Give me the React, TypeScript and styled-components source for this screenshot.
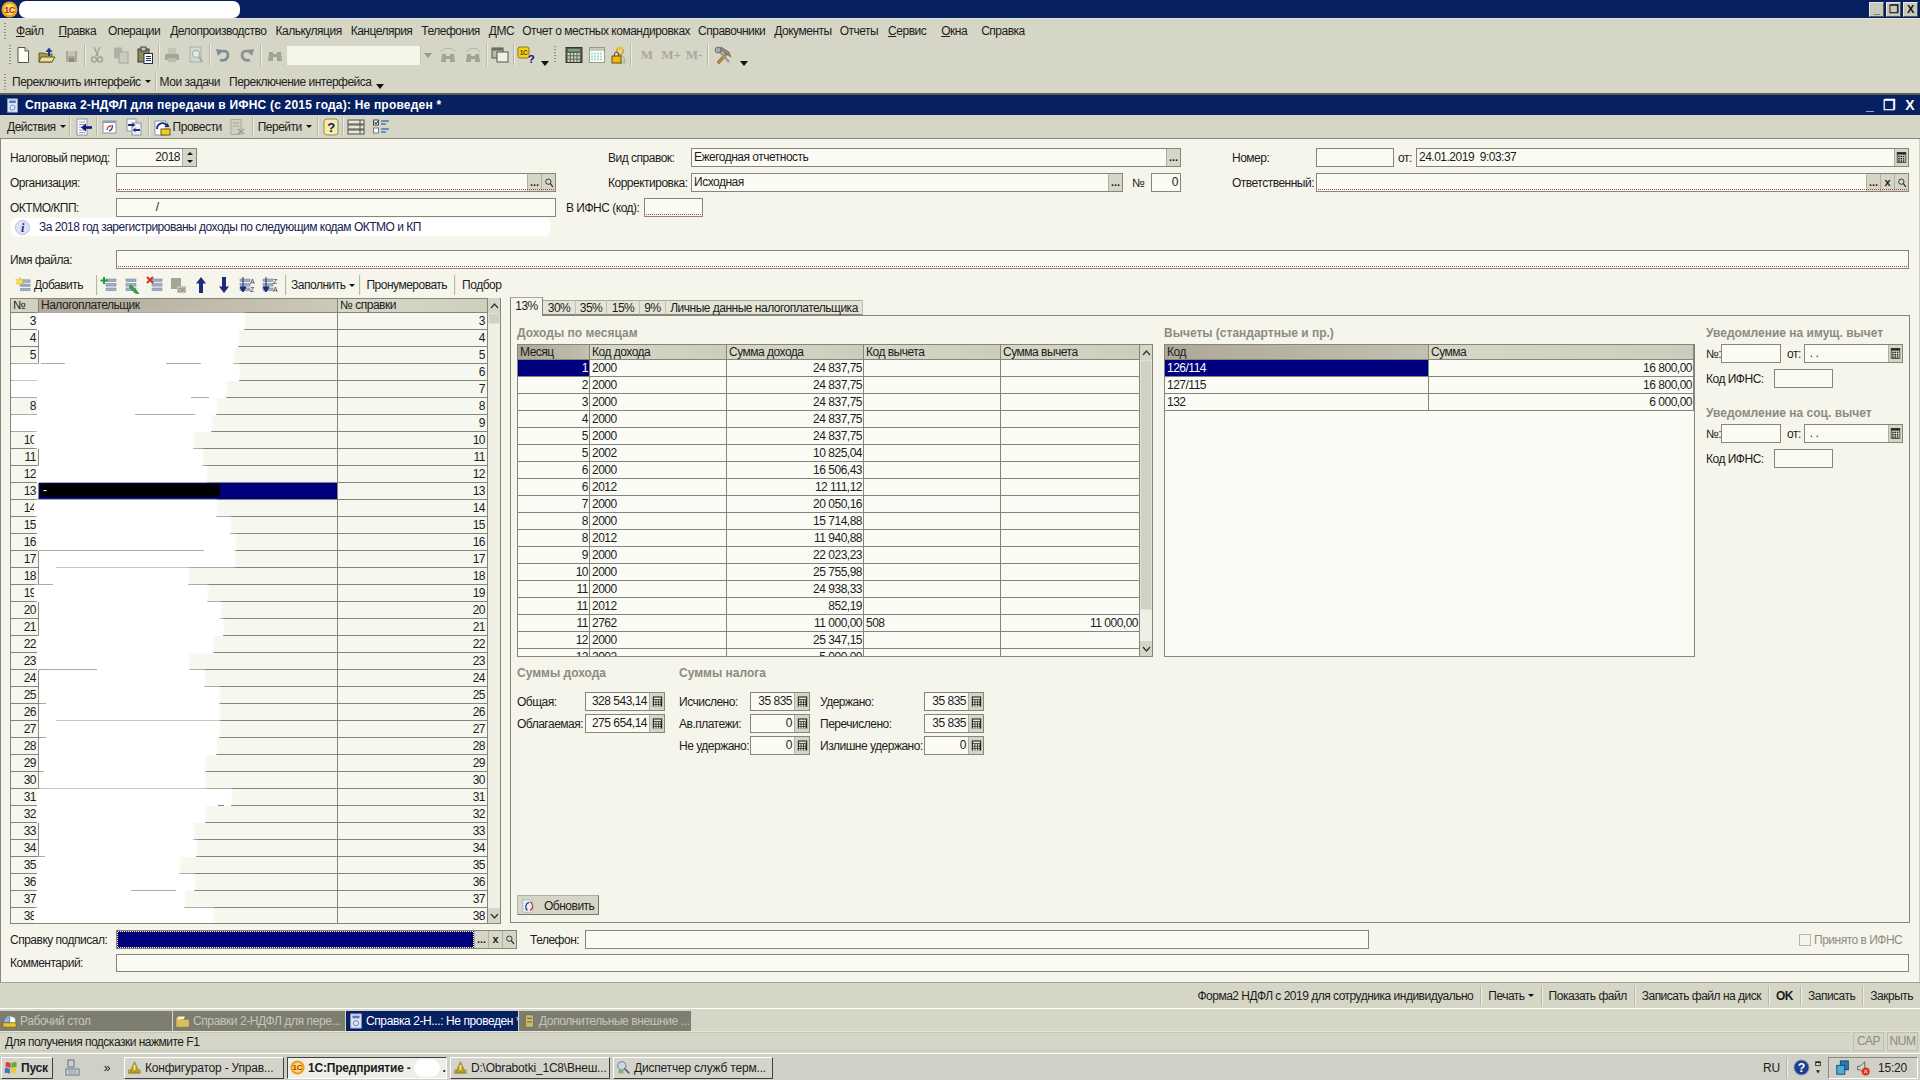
import React from "react";
import styled, { createGlobalStyle } from "styled-components";

const CHROME = "#d6d6c6";
const FORM = "#f6f5eb";
const LINE = "#85857a";
const NAVY = "#062062";
const SEL = "#00007e";

const GlobalStyle = createGlobalStyle`
  html, body { margin: 0; padding: 0; overflow: hidden; background: ${CHROME}; }
  body { font-family: "Liberation Sans", Arial, sans-serif; font-size: 12px; letter-spacing: -0.5px; color: #1c1c1c; }
  * { box-sizing: border-box; }
`;

const Page = styled.div`
  width: 1920px;
  height: 1080px;
  display: flex;
  flex-direction: column;
  overflow: hidden;
  white-space: nowrap;
`;

/* ---------- icons ---------- */
const bars = (x: number, c = "#9fb0c8") => (
  <g fill={c} stroke="#6f7f98" strokeWidth=".5">
    <rect x={x} y="3" width="10" height="2.6" />
    <rect x={x} y="7.5" width="10" height="2.6" />
    <rect x={x} y="12" width="10" height="2.6" />
  </g>
);
const keys = (x: number, y: number, c: string, cols = 3, rows = 3, step = 3.2) => {
  const out: React.ReactElement[] = [];
  for (let i = 0; i < cols; i++)
    for (let j = 0; j < rows; j++)
      out.push(<rect key={i + "-" + j} x={x + i * step} y={y + j * step} width={step - 1} height={step - 1} fill={c} />);
  return out;
};

const icons: Record<string, React.ReactElement> = {
  logo: (
    <g>
      <circle cx="9" cy="9" r="8.5" fill="#e8a020" />
      <circle cx="9" cy="9" r="6" fill="#f7e06a" />
      <text x="9" y="12.5" textAnchor="middle" fontSize="9.5" fontWeight="700" fill="#c8261a" fontFamily="Liberation Sans">1C</text>
    </g>
  ),
  doc: <g><path d="M4 1.5h7l3.5 3.5v11.5H4z" fill="#fffff2" stroke="#55554a" /><path d="M11 1.5V5h3.5" fill="#e2e2d2" stroke="#55554a" /></g>,
  open: <g><path d="M1 7h5l1 1h7v8H1z" fill="#a99d4e" stroke="#5b5a30" /><path d="M1 16l2-5h14l-3 5z" fill="#ebe097" stroke="#5b5a30" /><path d="M11 10V5" stroke="#1e3f80" strokeWidth="2" /><path d="M7.5 6L11 1.5 14.5 6z" fill="#1e3f80" /></g>,
  save: <g><rect x="4" y="5" width="11" height="11" fill="#a9a89a" /><rect x="6" y="5" width="7" height="5" fill="#c4c4b6" /><rect x="7" y="12" width="5" height="4" fill="#8c8b7e" /></g>,
  cut: <g fill="none" stroke="#a3a395" strokeWidth="1.5"><path d="M6 1l4 9M12 1L8 10" /><circle cx="6" cy="13.5" r="2.4" /><circle cx="12" cy="13.5" r="2.4" /></g>,
  copy: <g><rect x="2" y="1.5" width="8" height="11" fill="#b2b2a4" /><rect x="7" y="6" width="9" height="11" fill="#cbcbbd" stroke="#a5a597" /></g>,
  paste: <g><rect x="2" y="3" width="11" height="13" fill="#8c8a5a" stroke="#3a3a30" /><rect x="5" y="1" width="5" height="4" fill="#c8c8c0" stroke="#3a3a30" /><rect x="8" y="7.5" width="8.5" height="10" fill="#fff" stroke="#22304a" /><path d="M10 10.5h5M10 12.5h5M10 14.5h5" stroke="#22304a" /></g>,
  print: <g><rect x="5" y="2" width="8" height="6" fill="#c4c4b6" /><rect x="2" y="8" width="14" height="6" rx="1" fill="#a5a597" /><rect x="5" y="12" width="8" height="4" fill="#bcbcae" /></g>,
  preview: <g><rect x="3" y="1" width="11" height="15" fill="#d2d8d0" stroke="#a9b0a6" /><circle cx="9" cy="8" r="3.6" fill="#e4ece8" stroke="#9aabb0" /><path d="M12 11l3.5 5" stroke="#9aabb0" strokeWidth="2" /></g>,
  undo: <g><path d="M5 7c2-3 9-3 9 2s-5 6-8 5" fill="none" stroke="#7d8a9c" strokeWidth="2.6" /><path d="M2 3l7 1-5 6z" fill="#7d8a9c" /></g>,
  redo: <g transform="matrix(-1 0 0 1 18 0)"><path d="M5 7c2-3 9-3 9 2s-5 6-8 5" fill="none" stroke="#8e9095" strokeWidth="2.6" /><path d="M2 3l7 1-5 6z" fill="#8e9095" /></g>,
  binoc: <path d="M3 6h4v9H2zM11 6h4l1 9h-5zM7 8h4v3H7z" fill="#a3a395" />,
  binocL: <g><path d="M3 8h4v8H2zM11 8h4l1 8h-5zM7 10h4v3H7z" fill="#a3a395" /><path d="M2 6c3-5 11-5 14 0" fill="none" stroke="#b3b3a5" /></g>,
  win: <g><rect x="1" y="2" width="11" height="10" fill="#b8b8aa" stroke="#55554a" /><rect x="1" y="2" width="11" height="2.5" fill="#6c6c60" /><rect x="6" y="6" width="11" height="10" fill="#f0f0e4" stroke="#55554a" /></g>,
  help1c: <g><rect x="1" y="1" width="11" height="11" rx="2" fill="#f5d21a" stroke="#8a7a10" /><text x="6.5" y="9" textAnchor="middle" fontSize="6.5" fill="#6a4a00" fontWeight="700" fontFamily="Liberation Sans">1C</text><text x="14" y="16.5" textAnchor="middle" fontSize="11" fontWeight="700" fill="#12127e" fontFamily="Liberation Sans">?</text></g>,
  calc: <g><rect x="1" y="1.5" width="16" height="15" fill="#556050" stroke="#33382e" /><rect x="3" y="3" width="12" height="2.5" fill="#7ea070" />{keys(2.6, 7, "#d4d4c6", 4, 3, 3.3)}</g>,
  calendar: <g><rect x="1.5" y="1.5" width="15" height="15" fill="#fff" stroke="#9a9a8c" /><rect x="2" y="2" width="14" height="3" fill="#c8c8ba" />{keys(3, 6.5, "#a6e0d0", 4, 3, 3)}</g>,
  userlock: <g><circle cx="10" cy="5" r="3.4" fill="#f0cf8a" stroke="#a8873a" /><path d="M6 2l3-1.5 4 1v2H7z" fill="#e2c430" /><path d="M6 17c0-6 1-8 4-8s5 2 5 8z" fill="#bfd8a0" stroke="#7c9060" strokeWidth=".5" /><rect x="2" y="10" width="9" height="7" fill="#f0b818" stroke="#6c5010" /><path d="M4.5 10V8a2 2 0 014 0v2" fill="none" stroke="#6c5010" /></g>,
  tools: <g><path d="M3 16L12 6l2 2-9 10z" fill="#b9883e" stroke="#6a4c18" strokeWidth=".5" /><path d="M7 1l8 5 2 5-3-2-8-5z" fill="#8f8f88" stroke="#44443e" strokeWidth=".5" /><path d="M15 16L5 5" stroke="#9a9a92" strokeWidth="2.4" /><circle cx="4" cy="4" r="3" fill="#aaa" stroke="#44443e" strokeWidth=".6" /></g>,
  back: <g><rect x="2" y="1" width="10" height="16" fill="#fff" stroke="#8a94a8" /><path d="M4 4h6M4 6.5h6M4 9h6M4 12h6M4 14.5h6" stroke="#8c9cc0" /><path d="M17 9.5h-7" stroke="#14147e" strokeWidth="2.6" /><path d="M11 5.5L6 9.5l5 4z" fill="#14147e" /></g>,
  refresh: <g><rect x="2" y="3" width="13" height="12" fill="#fff" stroke="#8a94a8" /><rect x="2" y="3" width="13" height="2" fill="#8c9cc0" /><path d="M6 12c0-3 2-4 4-4" fill="none" stroke="#c0382a" strokeWidth="1.3" /><path d="M11 7c1 2 0 5-3 6" fill="none" stroke="#20407a" strokeWidth="1.3" /></g>,
  swap: <g><rect x="2" y="1" width="9" height="12" fill="#fff" stroke="#8a94a8" /><rect x="7" y="5" width="9" height="12" fill="#f2f4fa" stroke="#8a94a8" /><path d="M3 6h5l-1.5-2 4 3-4 3L8 8H3zM15 11h-5l1.5-2-4 3 4 3-1.5-2h5z" fill="#1c2c8a" /></g>,
  post: <g><rect x="2" y="3" width="11" height="14" fill="#fff" stroke="#8a94a8" /><path d="M4 11c0-6 7-8 10-3" fill="none" stroke="#1c2c8a" strokeWidth="1.8" /><path d="M11.5 9h5l-2-4z" fill="#1c2c8a" /><rect x="8" y="11" width="9" height="6" fill="#f0d020" stroke="#6c5a10" /></g>,
  postOff: <g><rect x="3" y="1.5" width="10" height="15" fill="#cfcfc2" stroke="#a9a99c" /><path d="M5 5h6M5 8h6" stroke="#a9a99c" /><path d="M10 11l6 5M16 11l-6 5" stroke="#9a9a8e" strokeWidth="1.4" /></g>,
  help: <g><rect x="2" y="1" width="14" height="16" rx="3" fill="#f6eea0" stroke="#8a8a70" /><text x="9" y="14" textAnchor="middle" fontSize="13" fontWeight="700" fill="#12127e" fontFamily="Liberation Sans">?</text></g>,
  columns: <g fill="#e6e6da" stroke="#50504a"><rect x="1" y="2" width="16" height="4" /><rect x="1" y="7" width="16" height="4" /><rect x="1" y="12" width="16" height="4" /><path d="M13 2v14" /></g>,
  checks: <g><rect x="1.5" y="2" width="5" height="5" fill="#fff" stroke="#444" /><path d="M2.5 4l1.5 2 2-3" fill="none" stroke="#111" /><rect x="1.5" y="10" width="5" height="5" fill="#fff" stroke="#777" /><path d="M9 3h8M9 6h5M9 11h8M9 14h5" stroke="#4a78b8" strokeWidth="1.6" /></g>,
  addRow: <g>{bars(6)}<path d="M5 0l1.3 3 3-.8-1.8 2.6 1.8 2.4-3-.6L5 9.5 3.7 6.6l-3 .6 1.8-2.4L.7 2.2l3 .8z" fill="#f6e24a" stroke="#c0a820" strokeWidth=".4" /></g>,
  rowAdd: <g>{bars(6)}<path d="M4 1v7M.5 4.5h7" stroke="#1c9a3a" strokeWidth="2" /></g>,
  rowEdit: <g>{bars(3)}<path d="M8 9l6 6 2 3-4-1-6-6z" fill="#2ea84a" stroke="#1c6a2a" strokeWidth=".5" /></g>,
  rowDel: <g>{bars(6)}<path d="M1 1l6 6M7 1L1 7" stroke="#d8301a" strokeWidth="2" /></g>,
  rowOk: <g><rect x="2" y="2" width="10" height="11" fill="#a5a597" /><rect x="8" y="10" width="9" height="7" fill="#c0c0b2" /><text x="12.4" y="16" textAnchor="middle" fontSize="5.5" fill="#77776a" fontFamily="Liberation Sans">OK</text></g>,
  up: <path d="M9 1L4 7.5h3V17h4V7.5h3z" fill="#1c2c7a" />,
  down: <path d="M9 17l-5-6.5h3V1h4v9.5h3z" fill="#1c2c7a" />,
  sortAZ: <g>{bars(2)}<path d="M5 1v13M2 11l3 5 3-5z" stroke="#1c2c7a" fill="#1c2c7a" /><text x="14" y="8" textAnchor="middle" fontSize="7" fill="#334" fontFamily="Liberation Sans">A</text><text x="14" y="16" textAnchor="middle" fontSize="7" fill="#334" fontFamily="Liberation Sans">Z</text></g>,
  sortZA: <g>{bars(2)}<path d="M5 1v13M2 11l3 5 3-5z" stroke="#1c2c7a" fill="#1c2c7a" /><text x="14" y="8" textAnchor="middle" fontSize="7" fill="#334" fontFamily="Liberation Sans">Z</text><text x="14" y="16" textAnchor="middle" fontSize="7" fill="#334" fontFamily="Liberation Sans">A</text></g>,
  update: <g><rect x="1" y="2" width="11" height="14" fill="#e8eef8" stroke="#98a6c0" strokeDasharray="2 1" /><path d="M6 14c-3-3-2-8 2-9" fill="none" stroke="#20407a" strokeWidth="1.4" /><path d="M9 4c4 3 4 8 0 10" fill="none" stroke="#c0382a" strokeWidth="1.4" /></g>,
  info: <g><circle cx="9" cy="9" r="7.5" fill="#dfe2f4" stroke="#b9bede" /><text x="9" y="14" textAnchor="middle" fontSize="13" fontStyle="italic" fontWeight="700" fill="#1c2c8a" fontFamily="Liberation Serif">i</text></g>,
  formDoc: <g><rect x="3" y="1" width="12" height="16" fill="#dfe6f4" stroke="#8a9ac0" /><rect x="5" y="3" width="8" height="3" fill="#5a78b8" /><circle cx="9" cy="11.5" r="3" fill="none" stroke="#5a78b8" /></g>,
  desk: <g><path d="M2 8l5-6 2 1v8H2z" fill="#8fb0e0" stroke="#445" strokeWidth=".4" /><path d="M9 3l6 3v6H9z" fill="#fff" stroke="#667" strokeWidth=".4" /><rect x="1" y="11" width="15" height="5" rx="1" fill="#e8c438" stroke="#7a6a18" /></g>,
  folder: <g><path d="M1 5h6l1 2h8v9H1z" fill="#d8c060" stroke="#7a6a30" strokeWidth=".6" /><path d="M3 4h8l-1 3H3z" fill="#f4f0e0" /></g>,
  cabinet: <g><path d="M5 2h9v14H5z" fill="#c8b878" stroke="#5a5030" strokeWidth=".6" /><path d="M2 6l3-2v12H2z" fill="#8a7c48" /><path d="M7 6h5M7 10h5" stroke="#5a5030" /></g>,
  flag: <g><path d="M2 3c3-2 4 1 6 0v6c-2 1-3-2-6 0z" fill="#e0402a" /><path d="M9 3c2 1 3-2 6 0v6c-3-2-4 1-6 0z" fill="#5cb03a" /><path d="M1 10c3-2 4 1 6 0v6c-2 1-3-2-6 0z" fill="#3a70d8" /><path d="M8 10c2 1 3-2 6 0v6c-3-2-4 1-6 0z" fill="#f0c828" /></g>,
  netbox: <g><rect x="4" y="1" width="6" height="7" fill="#c8d0d8" stroke="#66707a" /><rect x="2" y="10" width="13" height="6" fill="#d8dce0" stroke="#66707a" /><path d="M4 12h9M4 14h9" stroke="#88909a" /></g>,
  app: <g><rect x="2" y="12" width="14" height="4" fill="#d8c040" stroke="#6a6020" strokeWidth=".5" /><path d="M3 15L9 2l6 13z" fill="#b8a020" stroke="#6a6020" strokeWidth=".5" /><path d="M8 6h2v6H8z" fill="#f8f0a0" /></g>,
  term: <g><circle cx="7" cy="7" r="5" fill="#c8d8e8" stroke="#667" /><path d="M10 10l6 6" stroke="#667" strokeWidth="2" /><rect x="3" y="12" width="6" height="4" fill="#8fb05a" /></g>,
  helpRound: <g><circle cx="9" cy="9" r="8" fill="#20408a" stroke="#8a9ac0" /><text x="9" y="14" textAnchor="middle" fontSize="13" fontWeight="700" fill="#fff" fontFamily="Liberation Sans">?</text></g>,
  trayNet: <g><rect x="6" y="1" width="9" height="10" fill="#2a78b8" stroke="#17406a" /><rect x="2" y="6" width="9" height="10" fill="#4ab0d8" stroke="#17406a" /></g>,
  speaker: <g><path d="M3 7h3l5-5v14l-5-5H3z" fill="#d8d8cc" stroke="#555" /><circle cx="12" cy="13" r="4.5" fill="#d8301a" /><path d="M10 11l4 4M14 11l-4 4" stroke="#fff" /></g>,
  trayMore: <g><rect x="6" y="1" width="6" height="5" fill="none" stroke="#222" /><rect x="6" y="1" width="6" height="1.6" fill="#222" /><path d="M6.5 12h5L9 16z" fill="#222" /></g>,
  calcKey: <g><rect x="2.5" y="2" width="13" height="14" fill="#23231f" /><rect x="4" y="3.5" width="10" height="2.4" fill="#e4e4d8" />{keys(4, 7, "#e4e4d8", 3, 3, 3.4)}</g>,
  calKey: <g><rect x="3" y="2" width="12" height="14" fill="#e8e8dc" stroke="#222" /><rect x="3" y="2" width="12" height="3" fill="#222" />{keys(4.4, 6.4, "#222", 3, 3, 3.2)}</g>,
  mag: <g fill="none" stroke="#1e1e1e" strokeWidth="1.3"><circle cx="8" cy="7" r="4" /><path d="M11 10l4 5" strokeWidth="1.8" /></g>,
};

const IconBox = styled.svg`
  flex: none;
  display: block;
`;

const Icon = ({ n, s = 18 }: { n: string; s?: number }) => (
  <IconBox width={s} height={s} viewBox="0 0 18 18">
    {icons[n]}
  </IconBox>
);

/* ---------- app chrome ---------- */
const AppTitle = styled.div`
  height: 18px;
  background: ${NAVY};
  display: flex;
  align-items: center;
  flex: none;
`;
const LogoCell = styled.div`
  width: 19px;
  padding-left: 1px;
`;
const RedactPill = styled.div`
  width: 221px;
  height: 17px;
  background: #fff;
  border-radius: 7px;
`;
const WinButtons = styled.div`
  margin-left: auto;
  display: flex;
  gap: 2px;
  padding-right: 2px;
`;
const WinButton = styled.div`
  width: 15px;
  height: 15px;
  background: #c8c8bc;
  border: 1px solid #e8e8e0;
  border-right-color: #555;
  border-bottom-color: #555;
  font-size: 11px;
  line-height: 12px;
  font-weight: 700;
  text-align: center;
  color: #111;
`;
const WinGlyphs = styled.div`
  margin-left: auto;
  display: flex;
  align-items: center;
  color: #fff;
  font-weight: 700;
  font-size: 14px;
`;
const WinGlyph = styled.span`
  width: 20px;
  text-align: center;
`;

const MenuBar = styled.div`
  height: 22px;
  flex: none;
  background: ${CHROME};
  display: flex;
  align-items: center;
  padding: 2px 0 0 4px;
  border-top: 1px solid #e4e4d8;
`;
const Grip = styled.div<{ $h?: number; $l?: number; $r?: number }>`
  width: 2px;
  height: ${(p) => p.$h ?? 16}px;
  flex: none;
  margin: 0 ${(p) => p.$r ?? 0}px 0 ${(p) => p.$l ?? 0}px;
  background: repeating-linear-gradient(#8e8e80 0 1px, transparent 1px 3px);
`;
const MenuItem = styled.span<{ $ml: number }>`
  margin-left: ${(p) => p.$ml}px;
`;

const IconBar = styled.div`
  height: 30px;
  flex: none;
  background: ${CHROME};
  display: flex;
  align-items: center;
  padding-left: 9px;
`;
const ToolBtn = styled.div<{ $w?: number }>`
  width: ${(p) => p.$w ?? 24}px;
  flex: none;
  display: flex;
  justify-content: center;
`;
const ToolSep = styled.div<{ $h?: number; $mx?: number; $l?: number; $r?: number }>`
  width: 1px;
  height: ${(p) => p.$h ?? 22}px;
  flex: none;
  background: #b8b8a8;
  box-shadow: 1px 0 0 #ecece0;
  margin: 0 ${(p) => p.$r ?? p.$mx ?? 0}px 0 ${(p) => p.$l ?? p.$mx ?? 0}px;
`;
const Combo = styled.div`
  width: 148px;
  height: 19px;
  flex: none;
  display: flex;
  background: #f4f4e8;
`;
const ComboArrow = styled.div`
  margin-left: auto;
  width: 15px;
  background: ${CHROME};
  border-left: 1px solid #c4c4b4;
  display: flex;
  align-items: center;
  justify-content: center;
`;
const Caret = styled.i<{ $big?: boolean; $gray?: boolean }>`
  display: inline-block;
  flex: none;
  width: 0;
  height: 0;
  border-left: ${(p) => (p.$big ? 4 : 3)}px solid transparent;
  border-right: ${(p) => (p.$big ? 4 : 3)}px solid transparent;
  border-top: ${(p) => (p.$big ? 5 : 3)}px solid ${(p) => (p.$gray ? "#9a9a8c" : "#111")};
`;
const MoreCaret = styled(Caret)`
  align-self: flex-end;
  margin: 0 0 4px 4px;
`;
const MemKey = styled.span`
  font-family: "Liberation Serif", serif;
  font-weight: 700;
  font-size: 13px;
  letter-spacing: 0;
  color: #a8a89c;
`;

const TextBar = styled.div`
  height: 25px;
  flex: none;
  background: ${CHROME};
  display: flex;
  align-items: center;
  padding-left: 4px;
  border-bottom: 2px solid #5c5c54;
`;
const BarLabel = styled.span<{ $ml?: number; $bold?: boolean }>`
  margin-left: ${(p) => p.$ml ?? 0}px;
  font-weight: ${(p) => (p.$bold ? 700 : 400)};
  display: inline-flex;
  align-items: center;
  gap: 4px;
`;

const DocTitle = styled.div`
  height: 20px;
  flex: none;
  background: ${NAVY};
  color: #fff;
  display: flex;
  align-items: center;
  padding-left: 5px;
  gap: 5px;
  font-weight: 700;
  font-size: 12px;
  letter-spacing: 0.2px;
`;
const ActionBar = styled.div`
  height: 24px;
  flex: none;
  background: ${CHROME};
  border-bottom: 1px solid ${LINE};
  display: flex;
  align-items: center;
  padding-left: 7px;
`;

/* ---------- form ---------- */
const FormBody = styled.div`
  flex: 1;
  min-height: 0;
  background: ${FORM};
  border-left: 1px solid #8a8a7c;
  border-right: 1px solid #d0d0c0;
  display: flex;
  flex-direction: column;
`;
const TopGrid = styled.div`
  display: grid;
  grid-template-columns: 106px 440px 52px 83px 432px 58px 51px 84px 593px;
  grid-auto-rows: 19px;
  row-gap: 6px;
  padding: 9px 0 0 9px;
  align-items: center;
`;
const Label = styled.span<{ $w?: number; $ml?: number }>`
  flex: none;
  ${(p) => (p.$w ? `width: ${p.$w}px;` : "")}
  ${(p) => (p.$ml ? `margin-left: ${p.$ml}px;` : "")}
`;
const Span = styled.div<{ $c: string }>`
  grid-column: ${(p) => p.$c};
  display: flex;
  align-items: center;
  height: 19px;
  min-width: 0;
`;
const Field = styled.div<{ $w?: number; $req?: boolean; $h?: number }>`
  position: relative;
  flex: ${(p) => (p.$w ? "none" : 1)};
  ${(p) => (p.$w ? `width: ${p.$w}px;` : "")}
  height: ${(p) => p.$h ?? 19}px;
  background: #fbfbf4;
  border: 1px solid ${LINE};
  display: flex;
  align-items: stretch;
  line-height: 17px;
  min-width: 0;
  ${(p) =>
    p.$req
      ? `&::after { content: ""; position: absolute; left: 1px; right: 1px; bottom: 1px; border-bottom: 1px dotted #b83a3a; }`
      : ""}
`;
const FieldText = styled.span<{ $right?: boolean }>`
  flex: 1;
  padding: 0 2px;
  text-align: ${(p) => (p.$right ? "right" : "left")};
  overflow: hidden;
`;
const FieldBtn = styled.div<{ $w?: number }>`
  width: ${(p) => p.$w ?? 14}px;
  flex: none;
  background: ${CHROME};
  border-left: 1px solid #b0b0a0;
  display: flex;
  align-items: center;
  justify-content: center;
  font-size: 11px;
  font-weight: 700;
  letter-spacing: 0;
  line-height: 1;
`;
const Spin = styled.div`
  width: 14px;
  flex: none;
  background: ${CHROME};
  border-left: 1px solid #b0b0a0;
  display: flex;
  flex-direction: column;
  justify-content: space-around;
  align-items: center;
`;
const SpinUp = styled(Caret)`
  transform: rotate(180deg);
`;
const InfoRow = styled.div`
  margin: 1px 0 0 10px;
  height: 18px;
  width: 539px;
  display: flex;
  align-items: center;
  gap: 8px;
  padding-left: 3px;
  color: #17204a;
  background: #fff;
  border-radius: 6px;
  box-shadow: 0 0 3px #fff;
`;
const FileRow = styled.div`
  margin: 14px 0 0 9px;
  display: flex;
  align-items: center;
  padding-right: 10px;
`;
const TableBar = styled.div`
  height: 28px;
  flex: none;
  padding: 4px 0 0 14px;
  display: flex;
  align-items: center;
`;
const Split = styled.div`
  height: 626px;
  flex: none;
  display: flex;
  padding-left: 9px;
  gap: 9px;
`;

/* ---------- left list ---------- */
const ListBox = styled.div`
  margin-top: 1px;
  width: 491px;
  height: 626px;
  flex: none;
  border: 1px solid ${LINE};
  border-top: none;
  display: flex;
  background: #f6f8f0;
  overflow: hidden;
`;
const ListCols = styled.div`
  width: 477px;
  flex: none;
`;
const ListGrid = styled.div<{ $head?: boolean }>`
  position: relative;
  display: grid;
  grid-template-columns: 28px 299px 150px;
  height: ${(p) => (p.$head ? 15 : 17)}px;
`;
const HeadCell = styled.div<{ $dark?: boolean }>`
  background: ${(p) => (p.$dark ? "linear-gradient(90deg, #b0a999, #cbc9b9)" : "linear-gradient(90deg, #d8d8c8, #cfcfbf)")};
  border-right: 1px solid ${LINE};
  border-bottom: 1px solid ${LINE};
  border-top: 1px solid ${LINE};
  padding-left: 2px;
  font-size: 12px;
  line-height: 13px;
  overflow: hidden;
`;
const RowCell = styled.div<{ $sel?: boolean; $right?: boolean }>`
  background: ${(p) => (p.$sel ? SEL : "transparent")};
  color: ${(p) => (p.$sel ? "#fff" : "#1c1c1c")};
  border-right: 1px solid ${LINE};
  border-bottom: 1px solid ${LINE};
  padding: 0 2px;
  line-height: 16px;
  text-align: ${(p) => (p.$right ? "right" : "left")};
  overflow: hidden;
  font-size: 12px;
`;
const Smudge = styled.div`
  position: absolute;
  top: 0;
  height: 16px;
  background: #fff;
  box-shadow: 1px 0 2px #fff;
`;
const LineGap = styled.div`
  position: absolute;
  bottom: 0;
  height: 1px;
  background: #fff;
`;
const LineBit = styled.div`
  position: absolute;
  bottom: 0;
  height: 1px;
  background: ${LINE};
`;
const InkBlot = styled.div`
  position: absolute;
  left: 29px;
  top: 1px;
  width: 180px;
  height: 13px;
  background: #000;
  border-radius: 4px;
  color: #fff;
  padding-left: 3px;
  line-height: 13px;
`;

const Scroll = styled.div`
  flex: 1;
  display: flex;
  flex-direction: column;
  background: #efefe4;
  min-width: 0;
`;
const ScrollBtn = styled.div`
  height: 15px;
  flex: none;
  display: flex;
  align-items: center;
  justify-content: center;
  background: ${CHROME};
`;
const ScrollThumb = styled.div<{ $h?: number }>`
  background: #d2d2c4;
  border: 1px solid #e2e2d6;
  ${(p) => (p.$h ? `height: ${p.$h}px; flex: none;` : "flex: 1;")}
`;
const ScrollTrack = styled.div`
  flex: 1;
`;
const Chevron = styled.svg`
  display: block;
`;
const Chev = ({ up }: { up?: boolean }) => (
  <Chevron width="9" height="6" viewBox="0 0 9 6">
    <path d={up ? "M1 5l3.5-4L8 5" : "M1 1l3.5 4L8 1"} fill="none" stroke="#333" strokeWidth="1.2" />
  </Chevron>
);

/* ---------- tabs ---------- */
const TabSide = styled.div`
  width: 1400px;
  flex: none;
  display: flex;
  flex-direction: column;
`;
const TabStrip = styled.div`
  height: 18px;
  flex: none;
  display: flex;
  align-items: flex-end;
  position: relative;
  z-index: 1;
`;
const Tab = styled.div<{ $on?: boolean; $w: number }>`
  width: ${(p) => p.$w}px;
  height: ${(p) => (p.$on ? 19 : 15)}px;
  margin-bottom: ${(p) => (p.$on ? -1 : 0)}px;
  background: ${(p) => (p.$on ? FORM : "#e4e4d6")};
  border: 1px solid #a8a898;
  border-bottom: ${(p) => (p.$on ? "none" : "1px solid #85857a")};
  border-left: ${(p) => (p.$on ? "1px solid #85857a" : "none")};
  border-right-color: ${(p) => (p.$on ? "#85857a" : "#c0c0b0")};
  text-align: center;
  line-height: ${(p) => (p.$on ? 17 : 14)}px;
`;
const TabPanel = styled.div`
  flex: 1;
  min-height: 0;
  border: 1px solid ${LINE};
  padding: 0 6px 7px 6px;
  display: flex;
  flex-direction: column;
`;
const TopPart = styled.div`
  display: flex;
  gap: 11px;
  height: 341px;
  flex: none;
`;
const GroupCol = styled.div<{ $w: number }>`
  width: ${(p) => p.$w}px;
  flex: none;
`;
const GroupHead = styled.div<{ $h?: number }>`
  height: ${(p) => p.$h ?? 28}px;
  padding-top: 10px;
  font-weight: 700;
  font-size: 12px;
  letter-spacing: 0;
  color: #8c8c7e;
  line-height: 14px;
`;
const DataBox = styled.div`
  height: 313px;
  border: 1px solid ${LINE};
  background: #fafbf4;
  display: flex;
  overflow: hidden;
`;
const DataRow = styled.div<{ $cols: string; $h?: number }>`
  display: grid;
  grid-template-columns: ${(p) => p.$cols};
  height: ${(p) => p.$h ?? 17}px;
`;
const DataHead = styled.div<{ $dark?: boolean }>`
  background: ${(p) => (p.$dark ? "linear-gradient(90deg, #aea898, #c2c0b0)" : "linear-gradient(90deg, #d8d8c8, #cdcdbd)")};
  border-right: 1px solid ${LINE};
  border-bottom: 1px solid ${LINE};
  padding-left: 2px;
  line-height: 14px;
`;
const DataCell = styled(RowCell)`
  padding: 0 1px 0 2px;
`;
const DataCols = styled.div<{ $w: number }>`
  width: ${(p) => p.$w}px;
  flex: none;
`;
const NoticeRow = styled.div<{ $mb?: number }>`
  display: flex;
  align-items: center;
  height: 19px;
  margin-bottom: ${(p) => p.$mb ?? 6}px;
`;
const SumSection = styled.div`
  display: flex;
  flex: 1;
`;
const SumCol = styled.div<{ $w: number }>`
  width: ${(p) => p.$w}px;
  flex: none;
`;
const SumHead = styled(GroupHead)`
  height: 35px;
  padding-top: 9px;
`;
const SumRow = styled.div`
  display: flex;
  align-items: center;
  height: 19px;
  margin-bottom: 3px;
`;
const UpdateButton = styled.div`
  width: 82px;
  height: 20px;
  flex: none;
  background: ${CHROME};
  border: 1px solid #b0b0a0;
  border-right-color: #77776a;
  border-bottom-color: #77776a;
  display: flex;
  align-items: center;
  gap: 6px;
  padding: 1px 0 0 4px;
`;

/* ---------- bottom ---------- */
const BottomRow = styled.div<{ $mt: number; $h?: number }>`
  margin-top: ${(p) => p.$mt}px;
  height: ${(p) => p.$h ?? 19}px;
  display: flex;
  align-items: center;
  padding: 0 10px 0 9px;
  flex: none;
`;
const NavyValue = styled.div`
  flex: 1;
  margin: 1px;
  background: ${SEL};
  outline: 1px dotted #222;
`;
const Check = styled.span`
  width: 12px;
  height: 12px;
  border: 1px solid #b8b8aa;
  background: #f4f4ea;
  margin-left: 8px;
  flex: none;
`;
const DisabledText = styled.span`
  color: #8c8c82;
  margin-left: 3px;
`;
const BottomBar = styled.div`
  height: 27px;
  flex: none;
  background: ${CHROME};
  border-top: 1px solid #a4a496;
  border-bottom: 1px solid #fff;
  display: flex;
  align-items: center;
  justify-content: flex-end;
`;
const BarText = styled.span<{ $bold?: boolean }>`
  display: inline-flex;
  align-items: center;
  gap: 3px;
  margin: 0 7px;
  font-weight: ${(p) => (p.$bold ? 700 : 400)};
`;
const WinTabs = styled.div`
  height: 22px;
  flex: none;
  background: ${CHROME};
  display: flex;
  align-items: center;
  padding-top: 1px;
  letter-spacing: -0.4px;
`;
const WinTab = styled.div<{ $on?: boolean }>`
  width: 173px;
  height: 20px;
  background: ${(p) => (p.$on ? NAVY : "#7d7d70")};
  color: ${(p) => (p.$on ? "#fff" : "#c6c6b8")};
  display: flex;
  align-items: center;
  gap: 2px;
  padding-left: 2px;
  border-right: 1px solid #d6d6c6;
  overflow: hidden;
`;
const StatusBar = styled.div`
  height: 22px;
  flex: none;
  background: ${CHROME};
  display: flex;
  align-items: center;
  padding: 0 2px 2px 0;
  border-top: 1px solid #e6e6d8;
`;
const StatusText = styled.div`
  flex: 1;
  height: 19px;
  line-height: 19px;
  padding-left: 5px;
  border-bottom: 1px solid #c6c6b6;
  border-top: 1px solid #c6c6b6;
`;
const StatusKey = styled.div`
  width: 31px;
  height: 19px;
  margin-left: 3px;
  line-height: 17px;
  text-align: center;
  color: #8c8c80;
  border: 1px solid #c0c0b0;
`;
const TaskBar = styled.div`
  height: 27px;
  flex: none;
  background: #d0d0c6;
  border-top: 1px solid #fff;
  display: flex;
  align-items: center;
  padding: 1px 2px 0 1px;
  letter-spacing: -0.2px;
`;
const StartButton = styled.div`
  width: 52px;
  height: 22px;
  flex: none;
  background: #d4d4ca;
  border: 1px solid #fff;
  border-right-color: #404040;
  border-bottom-color: #404040;
  display: flex;
  align-items: center;
  font-weight: 700;
  gap: 2px;
  padding-left: 2px;
`;
const TaskButton = styled.div<{ $on?: boolean }>`
  width: 160px;
  height: 22px;
  flex: none;
  margin-left: 3px;
  background: ${(p) => (p.$on ? "#eeeee8" : "#d4d4ca")};
  border: 1px solid #fff;
  border-right-color: #404040;
  border-bottom-color: #404040;
  ${(p) => (p.$on ? "border-color: #404040 #fff #fff #404040; font-weight: 700;" : "")}
  display: flex;
  align-items: center;
  gap: 3px;
  padding-left: 2px;
  overflow: hidden;
`;
const Tray = styled.div`
  margin-left: auto;
  display: flex;
  align-items: center;
  height: 100%;
`;
const TrayBox = styled.div`
  width: 90px;
  height: 22px;
  margin-left: 2px;
  border: 1px solid #8a8a80;
  border-right-color: #fff;
  border-bottom-color: #fff;
  display: flex;
  align-items: center;
  padding-left: 6px;
  gap: 4px;
`;
const BlurSpot = styled.span`
  display: inline-block;
  width: 26px;
  height: 18px;
  background: #fff;
  border-radius: 9px;
  flex: none;
`;

/* ---------- data ---------- */
const menu: [React.ReactNode, number][] = [
  [<><u>Ф</u>айл</>, 10],
  [<><u>П</u>равка</>, 15],
  ["Операции", 12],
  ["Делопроизводство", 10],
  ["Калькуляция", 9],
  ["Канцелярия", 9],
  ["Телефония", 9],
  ["ДМС", 9],
  ["Отчет о местных командировках", 8],
  ["Справочники", 8],
  ["Документы", 9],
  ["Отчеты", 8],
  [<><u>С</u>ервис</>, 10],
  [<><u>О</u>кна</>, 15],
  ["Справка", 14],
];

// n, clip x of the number column, x where the row's line reappears, line remnants
type ListRow = { n: number; clip: number; line: number; white?: number; bits?: [number, number][] };
const listRows: ListRow[] = [
  { n: 3, clip: 36, line: 243 },
  { n: 4, clip: 38, line: 237 },
  { n: 5, clip: 38, line: 232, bits: [[40, 64], [165, 200]] },
  { n: 6, clip: 10, line: 238 },
  { n: 7, clip: 10, line: 225, bits: [[190, 208]] },
  { n: 8, clip: 36, line: 215, bits: [[134, 194]] },
  { n: 9, clip: 10, line: 210 },
  { n: 10, clip: 33, line: 192 },
  { n: 11, clip: 38, line: 201 },
  { n: 12, clip: 35, line: 38, white: 205 },
  { n: 13, clip: 0, line: 0 },
  { n: 14, clip: 33, line: 215 },
  { n: 15, clip: 35, line: 229 },
  { n: 16, clip: 37, line: 234, bits: [[38, 203]] },
  { n: 17, clip: 38, line: 55, white: 233 },
  { n: 18, clip: 38, line: 187, bits: [[38, 52]] },
  { n: 19, clip: 33, line: 206 },
  { n: 20, clip: 38, line: 219 },
  { n: 21, clip: 38, line: 222 },
  { n: 22, clip: 36, line: 212 },
  { n: 23, clip: 36, line: 188, bits: [[38, 96]] },
  { n: 24, clip: 38, line: 203 },
  { n: 25, clip: 38, line: 218, bits: [[38, 45]] },
  { n: 26, clip: 38, line: 55, white: 218 },
  { n: 27, clip: 38, line: 218, bits: [[38, 45]] },
  { n: 28, clip: 38, line: 215 },
  { n: 29, clip: 38, line: 204, bits: [[38, 43]] },
  { n: 30, clip: 38, line: 38, white: 204 },
  { n: 31, clip: 36, line: 230, bits: [[217, 223]] },
  { n: 32, clip: 36, line: 204 },
  { n: 33, clip: 38, line: 192 },
  { n: 34, clip: 38, line: 195, bits: [[38, 44]] },
  { n: 35, clip: 36, line: 178 },
  { n: 36, clip: 35, line: 193, bits: [[130, 175]] },
  { n: 37, clip: 35, line: 183 },
  { n: 38, clip: 33, line: 212 },
];

const income = [
  ["1", "2000", "24 837,75"],
  ["2", "2000", "24 837,75"],
  ["3", "2000", "24 837,75"],
  ["4", "2000", "24 837,75"],
  ["5", "2000", "24 837,75"],
  ["5", "2002", "10 825,04"],
  ["6", "2000", "16 506,43"],
  ["6", "2012", "12 111,12"],
  ["7", "2000", "20 050,16"],
  ["8", "2000", "15 714,88"],
  ["8", "2012", "11 940,88"],
  ["9", "2000", "22 023,23"],
  ["10", "2000", "25 755,98"],
  ["11", "2000", "24 938,33"],
  ["11", "2012", "852,19"],
  ["11", "2762", "11 000,00", "508", "11 000,00"],
  ["12", "2000", "25 347,15"],
  ["12", "2002", "5 000,00"],
];
const incomeCols = "72px 137px 137px 137px 139px";

const deductions = [
  ["126/114", "16 800,00"],
  ["127/115", "16 800,00"],
  ["132", "6 000,00"],
];
const dedCols = "264px 265px";

const ToolIcons = ({ list, w = 24 }: { list: string[]; w?: number }) => (
  <>
    {list.map((n) => (
      <ToolBtn key={n} $w={w}>
        <Icon n={n} />
      </ToolBtn>
    ))}
  </>
);

const Notice = ({ title }: { title: string }) => (
  <>
    <GroupHead>{title}</GroupHead>
    <NoticeRow>
      <Label $w={15}>№:</Label>
      <Field $w={60} />
      <Label $ml={6} $w={17}>от:</Label>
      <Field $w={99}>
        <FieldText>&nbsp;. .</FieldText>
        <FieldBtn><Icon n="calKey" s={13} /></FieldBtn>
      </Field>
    </NoticeRow>
    <NoticeRow $mb={8}>
      <Label $w={68}>Код ИФНС:</Label>
      <Field $w={59} />
    </NoticeRow>
  </>
);

const SumField = ({ value, w = 60 }: { value: string; w?: number }) => (
  <Field $w={w}>
    <FieldText $right>{value}</FieldText>
    <FieldBtn $w={15}><Icon n="calcKey" s={13} /></FieldBtn>
  </Field>
);

export default function App() {
  return (
    <Page>
      <GlobalStyle />
      <AppTitle>
        <LogoCell><Icon n="logo" s={17} /></LogoCell>
        <RedactPill />
        <WinButtons>
          <WinButton>_</WinButton>
          <WinButton>❐</WinButton>
          <WinButton>X</WinButton>
        </WinButtons>
      </AppTitle>

      <MenuBar>
        <Grip />
        {menu.map(([t, ml], i) => (
          <MenuItem key={i} $ml={ml}>{t}</MenuItem>
        ))}
      </MenuBar>

      <IconBar>
        <Grip $h={20} />
        <ToolBtn><Icon n="doc" /></ToolBtn>
        <ToolBtn><Icon n="open" /></ToolBtn>
        <ToolBtn><Icon n="save" /></ToolBtn>
        <ToolSep $l={1} />
        <ToolIcons list={["cut", "copy", "paste"]} />
        <ToolSep $mx={1} />
        <ToolIcons list={["print", "preview"]} />
        <ToolSep $mx={1} />
        <ToolIcons list={["undo", "redo"]} />
        <ToolSep $l={1} $r={2} />
        <ToolBtn><Icon n="binoc" /></ToolBtn>
        <Combo><ComboArrow><Caret $big $gray /></ComboArrow></Combo>
        <ToolBtn $w={26}><Icon n="binocL" /></ToolBtn>
        <ToolBtn><Icon n="binocL" /></ToolBtn>
        <ToolSep $mx={1} />
        <ToolBtn><Icon n="win" /></ToolBtn>
        <ToolSep $mx={1} />
        <ToolBtn $w={22}><Icon n="help1c" /></ToolBtn>
        <MoreCaret $big />
        <Grip $h={18} $l={5} $r={6} />
        <ToolBtn><Icon n="calc" /></ToolBtn>
        <ToolBtn $w={22}><Icon n="calendar" /></ToolBtn>
        <ToolBtn $w={22}><Icon n="userlock" /></ToolBtn>
        <ToolSep $l={0} $r={4} />
        <ToolBtn><MemKey>M</MemKey></ToolBtn>
        <ToolBtn><MemKey>M+</MemKey></ToolBtn>
        <ToolBtn $w={22}><MemKey>M-</MemKey></ToolBtn>
        <ToolSep $mx={2} />
        <ToolBtn $w={26}><Icon n="tools" /></ToolBtn>
        <MoreCaret $big />
      </IconBar>

      <TextBar>
        <Grip />
        <BarLabel $ml={6}>Переключить интерфейс <Caret /></BarLabel>
        <ToolSep $h={18} $mx={4} />
        <BarLabel>Мои задачи</BarLabel>
        <BarLabel $ml={9}>Переключение интерфейса</BarLabel>
        <MoreCaret $big />
      </TextBar>

      <DocTitle>
        <Icon n="formDoc" s={15} />
        Справка 2-НДФЛ для передачи в ИФНС (с 2015 года): Не проведен *
        <WinGlyphs>
          <WinGlyph>_</WinGlyph>
          <WinGlyph>❐</WinGlyph>
          <WinGlyph>X</WinGlyph>
        </WinGlyphs>
      </DocTitle>

      <ActionBar>
        <BarLabel>Действия <Caret /></BarLabel>
        <ToolSep $h={20} $mx={3} />
        <ToolBtn $w={22}><Icon n="back" /></ToolBtn>
        <ToolSep $h={20} $mx={1} />
        <ToolIcons list={["refresh", "swap"]} />
        <ToolSep $h={20} $mx={2} />
        <ToolBtn $w={22}><Icon n="post" /></ToolBtn>
        <BarLabel>Провести</BarLabel>
        <ToolBtn $w={30}><Icon n="postOff" /></ToolBtn>
        <ToolSep $h={20} />
        <BarLabel $ml={5}>Перейти <Caret /></BarLabel>
        <ToolSep $h={20} $mx={5} />
        <ToolBtn $w={16}><Icon n="help" /></ToolBtn>
        <ToolSep $h={20} $mx={3} />
        <ToolBtn $w={20}><Icon n="columns" /></ToolBtn>
        <ToolBtn $w={30}><Icon n="checks" /></ToolBtn>
      </ActionBar>

      <FormBody>
        <TopGrid>
          <Label>Налоговый период:</Label>
          <Span $c="2">
            <Field $w={81}>
              <FieldText $right>2018</FieldText>
              <Spin><SpinUp /><Caret /></Spin>
            </Field>
          </Span>
          <Span $c="4"><Label>Вид справок:</Label></Span>
          <Span $c="5 / 7">
            <Field>
              <FieldText>Ежегодная отчетность</FieldText>
              <FieldBtn>...</FieldBtn>
            </Field>
          </Span>
          <Span $c="8"><Label>Номер:</Label></Span>
          <Span $c="9">
            <Field $w={78} />
            <Label $ml={4} $w={18}>от:</Label>
            <Field>
              <FieldText>24.01.2019&nbsp; 9:03:37</FieldText>
              <FieldBtn><Icon n="calKey" s={13} /></FieldBtn>
            </Field>
          </Span>

          <Label>Организация:</Label>
          <Span $c="2">
            <Field $req>
              <FieldText />
              <FieldBtn>...</FieldBtn>
              <FieldBtn><Icon n="mag" s={12} /></FieldBtn>
            </Field>
          </Span>
          <Span $c="4"><Label>Корректировка:</Label></Span>
          <Span $c="5">
            <Field>
              <FieldText>Исходная</FieldText>
              <FieldBtn>...</FieldBtn>
            </Field>
          </Span>
          <Span $c="6">
            <Label $ml={9} $w={19}>№</Label>
            <Field $w={30}><FieldText $right>0</FieldText></Field>
          </Span>
          <Span $c="8"><Label>Ответственный:</Label></Span>
          <Span $c="9">
            <Field $req>
              <FieldText />
              <FieldBtn>...</FieldBtn>
              <FieldBtn>x</FieldBtn>
              <FieldBtn><Icon n="mag" s={12} /></FieldBtn>
            </Field>
          </Span>

          <Label>ОКТМО/КПП:</Label>
          <Span $c="2">
            <Field><FieldText>&nbsp;&nbsp;&nbsp;&nbsp;&nbsp;&nbsp;&nbsp;&nbsp;&nbsp;&nbsp;&nbsp;&nbsp;&nbsp;/</FieldText></Field>
          </Span>
          <Span $c="3 / 6">
            <Label $ml={10} $w={78}>В ИФНС (код):</Label>
            <Field $w={59} $req />
          </Span>
        </TopGrid>

        <InfoRow>
          <Icon n="info" s={17} />
          За 2018 год зарегистрированы доходы по следующим кодам ОКТМО и КП
        </InfoRow>

        <FileRow>
          <Label $w={106}>Имя файла:</Label>
          <Field $req />
        </FileRow>

        <TableBar>
          <Icon n="addRow" s={17} />
          <BarLabel $ml={2}><span><u>Д</u>обавить</span></BarLabel>
          <ToolSep $h={20} $l={13} $r={0} />
          <ToolIcons w={23} list={["rowAdd", "rowEdit", "rowDel", "rowOk", "up", "down", "sortAZ", "sortZA"]} />
          <ToolSep $h={20} $l={4} $r={5} />
          <BarLabel>Заполнить <Caret /></BarLabel>
          <ToolSep $h={20} $l={4} $r={6} />
          <BarLabel>Пронумеровать</BarLabel>
          <ToolSep $h={20} $l={7} $r={7} />
          <BarLabel>Подбор</BarLabel>
        </TableBar>

        <Split>
          <ListBox>
            <ListCols>
              <ListGrid $head>
                <HeadCell>№</HeadCell>
                <HeadCell $dark>Налогоплательщик</HeadCell>
                <HeadCell>№ справки</HeadCell>
              </ListGrid>
              {listRows.map((r) => {
                const gapLeft = Math.max(r.clip - 10, 26);
                return (
                  <ListGrid key={r.n}>
                    <RowCell $right>{r.n}</RowCell>
                    <RowCell $sel={r.n === 13} />
                    <RowCell $right>{r.n}</RowCell>
                    {r.n === 13 ? (
                      <InkBlot>-</InkBlot>
                    ) : (
                      <>
                        <Smudge style={{ left: r.clip - 10, width: (r.white ?? r.line) - r.clip }} />
                        <LineGap style={{ left: gapLeft, width: Math.max(r.line - 10 - gapLeft, 0) }} />
                        {r.bits?.map(([a, b]) => (
                          <LineBit key={a} style={{ left: a - 10, width: b - a }} />
                        ))}
                      </>
                    )}
                  </ListGrid>
                );
              })}
            </ListCols>
            <Scroll>
              <ScrollBtn><Chev up /></ScrollBtn>
              <ScrollThumb $h={11} />
              <ScrollTrack />
              <ScrollBtn><Chev /></ScrollBtn>
            </Scroll>
          </ListBox>

          <TabSide>
            <TabStrip>
              <Tab $on $w={33}>13%</Tab>
              <Tab $w={33}>30%</Tab>
              <Tab $w={31}>35%</Tab>
              <Tab $w={33}>15%</Tab>
              <Tab $w={26}>9%</Tab>
              <Tab $w={197}>Личные данные налогоплательщика</Tab>
            </TabStrip>
            <TabPanel>
              <TopPart>
                <GroupCol $w={636}>
                  <GroupHead>Доходы по месяцам</GroupHead>
                  <DataBox>
                    <DataCols $w={622}>
                      <DataRow $cols={incomeCols} $h={15}>
                        <DataHead $dark>Месяц</DataHead>
                        <DataHead>Код дохода</DataHead>
                        <DataHead>Сумма дохода</DataHead>
                        <DataHead>Код вычета</DataHead>
                        <DataHead>Сумма вычета</DataHead>
                      </DataRow>
                      {income.map((r, i) => (
                        <DataRow key={i} $cols={incomeCols}>
                          <DataCell $right $sel={i === 0}>{r[0]}</DataCell>
                          <DataCell>{r[1]}</DataCell>
                          <DataCell $right>{r[2]}</DataCell>
                          <DataCell>{r[3]}</DataCell>
                          <DataCell $right>{r[4]}</DataCell>
                        </DataRow>
                      ))}
                    </DataCols>
                    <Scroll>
                      <ScrollBtn><Chev up /></ScrollBtn>
                      <ScrollThumb $h={250} />
                      <ScrollTrack />
                      <ScrollBtn><Chev /></ScrollBtn>
                    </Scroll>
                  </DataBox>
                </GroupCol>

                <GroupCol $w={531}>
                  <GroupHead>Вычеты (стандартные и пр.)</GroupHead>
                  <DataBox>
                    <DataCols $w={529}>
                      <DataRow $cols={dedCols} $h={15}>
                        <DataHead $dark>Код</DataHead>
                        <DataHead>Сумма</DataHead>
                      </DataRow>
                      {deductions.map((r, i) => (
                        <DataRow key={i} $cols={dedCols}>
                          <DataCell $sel={i === 0}>{r[0]}</DataCell>
                          <DataCell $right>{r[1]}</DataCell>
                        </DataRow>
                      ))}
                    </DataCols>
                  </DataBox>
                </GroupCol>

                <GroupCol $w={197}>
                  <Notice title="Уведомление на имущ. вычет" />
                  <Notice title="Уведомление на соц. вычет" />
                </GroupCol>
              </TopPart>

              <SumSection>
                <SumCol $w={162}>
                  <SumHead>Суммы дохода</SumHead>
                  <SumRow>
                    <Label $w={68}>Общая:</Label>
                    <SumField value="328 543,14" w={80} />
                  </SumRow>
                  <SumRow>
                    <Label $w={68}>Облагаемая:</Label>
                    <SumField value="275 654,14" w={80} />
                  </SumRow>
                </SumCol>
                <SumCol $w={320}>
                  <SumHead>Суммы налога</SumHead>
                  <SumRow>
                    <Label $w={71}>Исчислено:</Label>
                    <SumField value="35 835" />
                    <Label $ml={10} $w={104}>Удержано:</Label>
                    <SumField value="35 835" />
                  </SumRow>
                  <SumRow>
                    <Label $w={71}>Ав.платежи:</Label>
                    <SumField value="0" />
                    <Label $ml={10} $w={104}>Перечислено:</Label>
                    <SumField value="35 835" />
                  </SumRow>
                  <SumRow>
                    <Label $w={71}>Не удержано:</Label>
                    <SumField value="0" />
                    <Label $ml={10} $w={104}>Излишне удержано:</Label>
                    <SumField value="0" />
                  </SumRow>
                </SumCol>
              </SumSection>
              <UpdateButton>
                <Icon n="update" s={16} />
                Обновить
              </UpdateButton>
            </TabPanel>
          </TabSide>
        </Split>

        <BottomRow $mt={7}>
          <Label $w={106}>Справку подписал:</Label>
          <Field $w={401}>
            <NavyValue />
            <FieldBtn>...</FieldBtn>
            <FieldBtn>x</FieldBtn>
            <FieldBtn><Icon n="mag" s={12} /></FieldBtn>
          </Field>
          <Label $ml={13} $w={55}>Телефон:</Label>
          <Field $w={784} />
          <Label $ml={422} />
          <Check />
          <DisabledText>Принято в ИФНС</DisabledText>
        </BottomRow>
        <BottomRow $mt={5} $h={18}>
          <Label $w={106}>Комментарий:</Label>
          <Field $h={18} />
        </BottomRow>
      </FormBody>

      <BottomBar>
        <BarText>Форма2 НДФЛ с 2019 для сотрудника индивидуально</BarText>
        <ToolSep $h={20} />
        <BarText>Печать <Caret /></BarText>
        <ToolSep $h={20} />
        <BarText>Показать файл</BarText>
        <ToolSep $h={20} />
        <BarText>Записать файл на диск</BarText>
        <ToolSep $h={20} />
        <BarText $bold>OK</BarText>
        <ToolSep $h={20} />
        <BarText>Записать</BarText>
        <ToolSep $h={20} />
        <BarText>Закрыть</BarText>
      </BottomBar>

      <WinTabs>
        <WinTab><Icon n="desk" s={16} />Рабочий стол</WinTab>
        <WinTab><Icon n="folder" s={16} />Справки 2-НДФЛ для пере...</WinTab>
        <WinTab $on><Icon n="formDoc" s={16} />Справка 2-Н...: Не проведен *</WinTab>
        <WinTab><Icon n="cabinet" s={16} />Дополнительные внешние ...</WinTab>
      </WinTabs>

      <StatusBar>
        <StatusText>Для получения подсказки нажмите F1</StatusText>
        <StatusKey>CAP</StatusKey>
        <StatusKey>NUM</StatusKey>
      </StatusBar>

      <TaskBar>
        <StartButton><Icon n="flag" s={15} />Пуск</StartButton>
        <ToolBtn $w={40}><Icon n="netbox" /></ToolBtn>
        <ToolBtn $w={28}>»</ToolBtn>
        <TaskButton><Icon n="app" s={15} />Конфигуратор - Управ...</TaskButton>
        <TaskButton $on><Icon n="logo" s={15} />1С:Предприятие - <BlurSpot />.</TaskButton>
        <TaskButton><Icon n="app" s={15} />D:\Obrabotki_1C8\Внеш...</TaskButton>
        <TaskButton><Icon n="term" s={15} />Диспетчер служб терм...</TaskButton>
        <Tray>
          <BarLabel>RU</BarLabel>
          <ToolSep $h={20} $mx={6} />
          <Icon n="helpRound" s={17} />
          <ToolBtn $w={16}><Icon n="trayMore" s={14} /></ToolBtn>
          <TrayBox>
            <Icon n="trayNet" s={16} />
            <Icon n="speaker" s={16} />
            <BarLabel $ml={3}>15:20</BarLabel>
          </TrayBox>
        </Tray>
      </TaskBar>
    </Page>
  );
}
